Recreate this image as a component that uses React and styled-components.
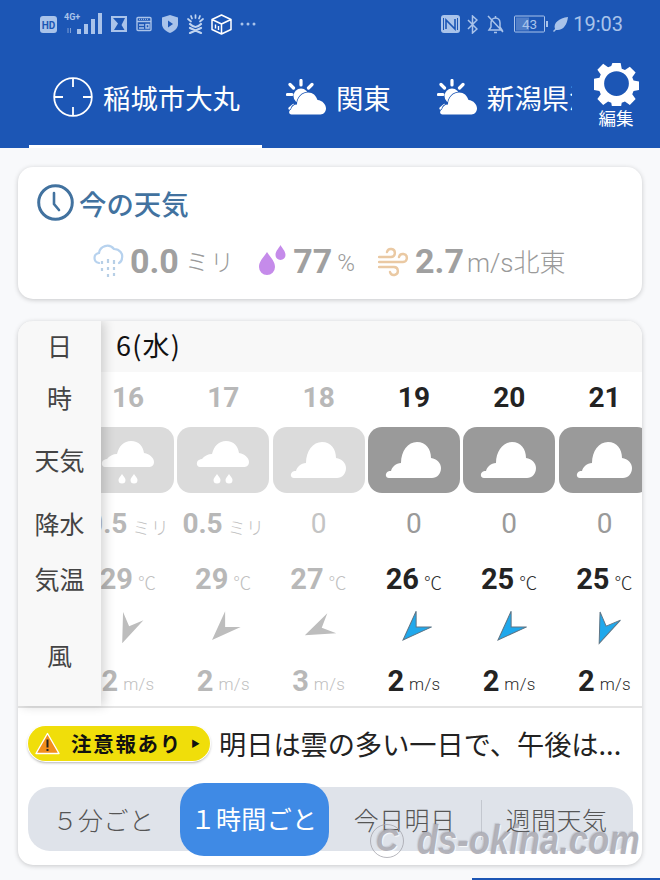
import React from 'react';
import styled, { createGlobalStyle } from 'styled-components';

const Global = createGlobalStyle`
  html, body { margin: 0; padding: 0; background: #f8f9fb; }
  body { font-family: Roboto, "Noto Sans CJK JP", sans-serif; }
`;
const JP = `"Noto Sans CJK JP", sans-serif`;
const NUM = `Roboto, "Noto Sans CJK JP", sans-serif`;

const Page = styled.div`
  position: relative; width: 660px; height: 880px; overflow: hidden; background: #f8f9fb;
`;
const Header = styled.header`
  height: 148px; background: #1c56b5; display: flex; flex-direction: column;
`;
const StatusBar = styled.div`
  height: 48px; padding: 0 37px 0 40px; display: flex; align-items: center; justify-content: space-between; color: #a9c3ea;
`;
const StatusGroup = styled.div`
  display: flex; align-items: center;
`;
const Slot = styled.span`
  display: flex; align-items: center; margin-left: ${p => p.$ml || 0}px;
`;
const Clock = styled.span`
  font: 400 20px ${NUM}; color: #a9c3ea; margin-left: 5px;
`;
const HeaderRow = styled.div`
  flex: 1; display: flex; min-height: 0;
`;
const Tabs = styled.div`
  margin-left: 29px; width: 543px; display: flex; overflow: hidden; white-space: nowrap;
`;
const Tab = styled.div`
  flex: none; height: 100px; box-sizing: border-box; padding: 0 22px 0 24px; display: flex; align-items: center; gap: 10px;
  color: #fff; font: 400 27.4px ${JP}; border-bottom: 3px solid ${p => p.$active ? '#fff' : 'transparent'};
`;
const TabClip = styled.span`
  display: block; white-space: nowrap;
`;
const Edit = styled.div`
  flex: 1; display: flex; flex-direction: column; align-items: center; padding: 13px 0 0 0; color: #fff; font: 400 17.5px/20px ${JP};
  svg { display: block; margin-bottom: 2px; }
`;
const Main = styled.main`
  padding: 19px 18px 0; display: flex; flex-direction: column; gap: 22px;
`;
const Card = styled.section`
  position: relative; background: #fff; border-radius: 15px; box-shadow: 0 1px 5px rgba(0,0,0,.2); overflow: hidden;
`;
const NowCard = styled(Card)`
  height: 132px; box-sizing: border-box; padding: 17px 19px 0;
`;
const NowTitle = styled.h2`
  margin: 0; display: flex; align-items: center; gap: 5px; height: 37px; color: #42729f; font: 500 27.4px ${JP};
`;
const Metrics = styled.div`
  display: flex; align-items: center; height: 42px; margin: 19px 0 0 56px;
`;
const Metric = styled.div`
  display: flex; align-items: center; margin-right: ${p => p.$mr}px;
`;
const MetricNum = styled.b`
  font: 700 34px/42px ${NUM}; color: #a0a0a0; margin: 0 ${p => p.$mr || 6}px 0 ${p => p.$ml || 6}px;
`;
const MetricUnit = styled.span`
  font: 300 ${p => p.$size || 24}px/42px ${NUM}; color: #9a9a9a; padding-top: 3px; letter-spacing: ${p => p.$ls || 0}px;
`;
const TableCard = styled(Card)`
  height: 544px;
`;
const DateRow = styled.div`
  height: 51px; background: #f8f8f8; padding-left: 98px; font: 400 27px/47px ${JP}; color: #111; letter-spacing: 1.2px;
`;
const Strip = styled.div`
  display: flex; padding-left: 62.4px; height: 334px; border-bottom: 2px solid #e4e4e4; overflow: hidden;
`;
const Column = styled.div`
  flex: none; width: 95.3px; display: flex; flex-direction: column; align-items: center;
  color: ${p => p.$past ? '#b8b8b8' : '#232323'};
`;
const HourCell = styled.div`
  height: 52px; font: 700 28px/52px ${NUM};
`;
const Tile = styled.div`
  flex: none; width: 92px; height: 66px; margin: 3px 0 0; border-radius: 14px; background: ${p => p.$past ? '#dbdbdb' : '#9a9a9a'};
  svg { display: block; }
`;
const ValueCell = styled.div`
  height: ${p => p.$h}px; display: flex; align-items: center; justify-content: center; gap: 5px; white-space: nowrap;
`;
const Big = styled.b`
  font: 700 ${p => p.$size || 29}px ${NUM};
`;
const Thin = styled.span`
  font: 400 28px ${NUM}; color: ${p => p.$past ? '#c4c4c4' : '#9a9a9a'};
`;
const Small = styled.span`
  font: 300 ${p => p.$size || 17}px ${NUM}; padding-top: 6px; letter-spacing: .3px; color: ${p => p.$past ? '#c0c0c0' : '#2a2a2a'};
`;
const RowLabels = styled.div`
  position: absolute; left: 0; top: 0; width: 83px; height: 385px; background: #f8f8f8; display: flex; flex-direction: column;
  box-shadow: 4px 0 10px rgba(0,0,0,.16);
`;
const RowLabel = styled.div`
  height: ${p => p.$h}px; box-sizing: border-box; padding-bottom: ${p => p.$low ? 0 : 3}px; padding-top: ${p => p.$low ? 1 : 0}px;
  display: flex; align-items: center; justify-content: center; font: 400 25px ${JP}; color: #444;
`;
const Notice = styled.div`
  height: 79px; display: flex; align-items: center; padding: 0 0 9px 10px; box-sizing: border-box;
`;
const Badge = styled.div`
  flex: none; width: 182px; height: 35px; box-sizing: border-box; border-radius: 18px; background: #f0de0a; padding-left: 7px;
  display: flex; align-items: center; box-shadow: 0 0 0 1px #fff, 0 1.5px 3px rgba(0,0,0,.4); font: 700 20.5px ${JP}; color: #111;
  letter-spacing: 1.7px;
  span.t { margin-left: 11px; }
  span.a { margin-left: 9px; font-size: 9px; letter-spacing: 0; }
`;
const NoticeText = styled.div`
  margin-left: 9px; font: 400 27.2px ${JP}; color: #222; white-space: nowrap;
`;
const Segment = styled.div`
  margin: 0 9.5px; height: 64px; background: #dfe3ea; border-radius: 22px; display: flex; align-items: center;
`;
const SegItem = styled.div`
  flex: 1; position: relative; text-align: center; font: 300 25px/60px ${JP}; letter-spacing: .4px;
  color: ${p => p.$active ? '#fff' : '#555'};
  ${p => p.$active ? `background:#3f8ae5; height:73px; line-height:71px; border-radius:24px; font-weight:400; flex:none; width:149px;` : ''}
  ${p => p.$sep ? `&::before{content:"";position:absolute;left:0;top:11px;height:40px;width:1px;background:#c3c7cf;}` : ''}
`;
const Watermark = styled.div`
  position: absolute; left: 370px; top: 818px; display: flex; align-items: center; gap: 13px; white-space: nowrap;
  font: italic 700 40px "Liberation Sans", sans-serif; letter-spacing: .2px; color: rgba(170,170,178,.88);
  text-shadow: 1px 1px 1px rgba(255,255,255,.8), -1px -1px 1px rgba(120,120,130,.25);
  i.c { flex: none; width: 32px; height: 32px; border: 1.5px solid rgba(165,165,172,.8); border-radius: 50%; display: flex; align-items: center; justify-content: center; font-size: 31px; }
  span { display: block; transform: scaleX(.857); transform-origin: left center; }
`;
const BottomEdge = styled.div`
  position: absolute; left: 472px; right: 0; bottom: 0; height: 2px; background: #1c56b5;
`;

const CLOUD = 'M5.500 35.500c-3 0-3-4-.5-5 .5-3 3-5 6-5 0-7 5-12 11-12 5 0 8 3 9.500 7.500 5 .5 8.500 4.500 8.500 8.500 0 3-2.500 6-5.500 6z';
const SunCloud = () => (
  <svg width="40" height="36" viewBox="0 0 40 36" fill="#fff" style={{ flex: 'none' }}>
    <path d="M15 1.500v4.500M4 5.500l3.500 3.500M26 5.500l-3.500 3.500M1.500 15.500h4.500M4 29.500l3.500-3" stroke="#fff" strokeWidth="3.200" strokeLinecap="round" />
    <circle cx="15" cy="17" r="7.500" />
    <path d={CLOUD} stroke="#1c56b5" strokeWidth="1.400" />
    <path d={CLOUD} />
  </svg>
);
const Cross = () => (
  <svg width="40" height="40" viewBox="0 0 40 40" fill="none" stroke="#fff" strokeWidth="1.800" style={{ flex: 'none' }}>
    <circle cx="20" cy="20" r="18.800" />
    <path d="M20 1v9M20 30v9M1 20h9M30 20h9" />
  </svg>
);
const Gear = () => (
  <svg width="45" height="45" viewBox="0 0 24 24" fill="#fff">
    <path fillRule="evenodd" d="M9.800 1h4.400l.6 3.100 1.700.7 2.600-1.800 3.100 3.100-1.800 2.600.7 1.700 3 .6v4.400l-3 .6-.7 1.700 1.800 2.600-3.100 3.100-2.600-1.800-1.700.7-.6 3.200H9.800l-.6-3.200-1.700-.7-2.600 1.800-3.100-3.100 1.800-2.600-.7-1.700-3-.6V9.500l3-.6.7-1.700L1.800 4.600 4.900 1.500 7.500 3.300l1.700-.7zM12 5.400a6.600 6.600 0 1 0 0 13.200 6.600 6.600 0 0 0 0-13.200z" />
  </svg>
);
const ClockIcon = () => (
  <svg width="37" height="37" viewBox="0 0 37 37" fill="none" stroke="#42729f" strokeWidth="3" style={{ flex: 'none' }}>
    <circle cx="18.500" cy="18.500" r="16.800" />
    <path d="M17 9v11l5 6" strokeWidth="2.600" strokeLinecap="round" />
  </svg>
);
const RainIcon = () => (
  <svg width="31" height="36" viewBox="0 0 31 36" fill="none">
    <path d="M6 20c-6-1-6-9 0-10C7 3 16 0 21 6c6 0 9 5 8 9 0 2-1 4-3 5" stroke="#b7d2ee" strokeWidth="2.200" strokeLinecap="round" />
    <path d="M9 18v3M15 16v4M21 17v4M9 25v3M15 24v3M21 24v3M15 31v3M21 30v3" stroke="#b7cfe6" strokeWidth="2.200" />
  </svg>
);
const DropIcon = () => (
  <svg width="28" height="32" viewBox="0 0 28 32" fill="#c58bea">
    <path d="M8 7c3 5 8 9 8 15a8 8 0 0 1-16 0c0-6 5-10 8-15z" />
    <path d="M21.500 0c1.500 3 5 6 5 10a5 5 0 0 1-10 0c0-4 3.500-7 5-10z" />
  </svg>
);
const WindIcon = () => (
  <svg width="31" height="32" viewBox="0 0 31 32" fill="none" stroke="#eac9a3" strokeWidth="2.400" strokeLinecap="round">
    <path d="M1 12h12a4 4 0 1 0-4-5" />
    <path d="M1 17h24a4 4 0 1 0-4-5" />
    <path d="M1 22h15a4 4 0 1 1-4 5" />
  </svg>
);
const CloudTile = () => (
  <svg width="92" height="66" viewBox="0 0 92 66" fill="#fff">
    <path d="M21 51c-4 0-4-5-1-6.500 1-.5 2-.5 3-.5 1-4 5-8 10-8 0-12 7-21 16-21 9 0 14 7 14 16 6 1 10 5 10 10 0 6-4 10-9 10z" />
  </svg>
);
const RainTile = () => (
  <svg width="92" height="66" viewBox="0 0 92 66" fill="#fff">
    <path d="M23 40c-4 0-4-6-1-7 1-.5 2-1 3-1 2-3 6-5 10-5 2-8 7-13 14-13 8 0 12 5 13 12 6 1 10 5 10 9 0 4-3 5-5 5z" />
    <path d="M40 47c2 3 3.500 4 3.500 6a3.500 3.500 0 0 1-7 0c0-2 1.500-3 3.500-6zM52 47c2 3 3.500 4 3.500 6a3.500 3.500 0 0 1-7 0c0-2 1.500-3 3.500-6z" />
  </svg>
);
const Arrow = ({ deg, past }) => (
  <svg width="40" height="40" viewBox="0 0 40 40" style={{ transform: `rotate(${deg}deg)` }}>
    <path d="M20 4.500 31 34 20 23 9 34z" fill={past ? '#bdbdbd' : '#1fa8ec'} stroke={past ? 'none' : '#5f7585'} strokeWidth="1" />
  </svg>
);
const TriangleIcon = () => (
  <svg width="25" height="23" viewBox="0 0 25 23">
    <path d="M12.500 1.500 24 21.500H1z" fill="#f28e1c" stroke="#fff" strokeWidth="1.400" strokeLinejoin="round" />
    <path d="M12.500 7.500v8M12.500 17v2" stroke="#222" strokeWidth="2" />
  </svg>
);
const HD = () => (
  <svg width="17" height="17" viewBox="0 0 17 17">
    <rect width="17" height="17" rx="3" fill="#a9c3ea" />
    <text x="8.500" y="12.500" fontSize="10" fontWeight="700" fontFamily="Roboto" fill="#1c56b5" textAnchor="middle">HD</text>
  </svg>
);
const Signal = () => (
  <svg width="38" height="24" viewBox="0 0 38 24" fill="#a9c3ea">
    <text x="0" y="8" fontSize="9" fontWeight="700" fontFamily="Roboto">4G+</text>
    <path d="M4 16v5M6.500 21v-5" stroke="#7f9fd6" strokeWidth="1" />
    <rect x="13" y="17" width="4" height="5" />
    <rect x="20" y="12" width="4" height="10" />
    <rect x="27" y="7" width="4" height="15" />
    <rect x="34" y="1" width="4" height="21" />
  </svg>
);
const IconK = () => (
  <svg width="16" height="16" viewBox="0 0 16 16" fill="#a9c3ea">
    <path fillRule="evenodd" d="M0 0h16v16H0zM2 2l5 5.500L3 14h10.500l-3-5 3.500-7H11L6 2z" />
  </svg>
);
const IconCal = () => (
  <svg width="16" height="16" viewBox="0 0 16 16" fill="none" stroke="#a9c3ea" strokeWidth="1.400">
    <rect x="1" y="1.500" width="14" height="13" rx="1" />
    <path d="M1 5.500h14M3 9h5M3 12h5M10 8.500h3v3.500h-3z" />
    <path d="M3 3.300h10" strokeDasharray="1 1" strokeWidth="1" />
  </svg>
);
const IconShield = () => (
  <svg width="16" height="18" viewBox="0 0 16 18">
    <path d="M8 0l8 2.500V9c0 4-3 7-8 9-5-2-8-5-8-9V2.500z" fill="#a9c3ea" />
    <path d="M6 5.500l5 3.500-5 3.500z" fill="#1c56b5" />
  </svg>
);
const IconClaw = () => (
  <svg width="17" height="20" viewBox="0 0 17 20" fill="none" stroke="#c0d4f0" strokeWidth="1.700" strokeLinecap="round">
    <path d="M8.500 1v3M4 2l1 2.500M13 2l-1 2.500M1 5l3 2.500M16 5l-3 2.500" />
    <path d="M3 10c2 2 3.500 3 5.500 3s3.500-1 5.500-3M3 19l11-5M14 19 3 14" strokeWidth="2.200" />
  </svg>
);
const IconCube = () => (
  <svg width="21" height="21" viewBox="0 0 21 21" fill="none" stroke="#fff" strokeWidth="1.500" strokeLinejoin="round">
    <path d="M10.500 1 20 5.500v10L10.500 20 1 15.500v-10zM1 5.500l9.500 4.500L20 5.500M10.500 10v10" />
    <path d="M4.500 10.500v4M7.500 12v4" strokeWidth="1.400" />
  </svg>
);
const Dots = () => (
  <svg width="16" height="4" viewBox="0 0 16 4" fill="#a9c3ea"><circle cx="2" cy="2" r="1.500" /><circle cx="8" cy="2" r="1.500" /><circle cx="14" cy="2" r="1.500" /></svg>
);
const IconNfc = () => (
  <svg width="19" height="18" viewBox="0 0 19 18">
    <rect width="19" height="18" rx="3" fill="#a9c3ea" />
    <path d="M5 14V5l9 9V4" fill="none" stroke="#1c56b5" strokeWidth="1.600" />
    <path d="M2.500 3v12M16.500 3v12" stroke="#1c56b5" strokeWidth="1" />
  </svg>
);
const IconBt = () => (
  <svg width="11" height="19" viewBox="0 0 11 19" fill="none" stroke="#a9c3ea" strokeWidth="1.500">
    <path d="M1 5l9 9-4.500 4V1L10 5 1 14" />
  </svg>
);
const IconBell = () => (
  <svg width="17" height="19" viewBox="0 0 17 19" fill="none" stroke="#a9c3ea" strokeWidth="1.500">
    <path d="M2 15h13l-2-3V8c0-3-2-5-4.500-5S4 5 4 8v4zM7 17.500h3M1 1l15 16M8.500 1v2" />
  </svg>
);
const Battery = () => (
  <svg width="36" height="18" viewBox="0 0 36 18">
    <rect x=".5" y="1" width="30" height="16" rx="1" fill="none" stroke="#a9c3ea" />
    <rect x="2" y="2.500" width="13" height="13" fill="#4f7dc7" />
    <text x="15.500" y="14" fontSize="13.500" fontFamily="Roboto" fill="#a9c3ea" textAnchor="middle">43</text>
    <rect x="32" y="6" width="2" height="6" fill="#a9c3ea" />
  </svg>
);
const Leaf = () => (
  <svg width="15" height="15" viewBox="0 0 15 15" fill="#a9c3ea"><path d="M15 0C14 8 10 14 3 13L1 15 0 14l2-2C0 6 6 1 15 0z" /></svg>
);

const hours = [
  { h: 16, past: 1, rain: '0.5', rainU: 1, t: 29, deg: 202, ws: 2, icon: 'r' },
  { h: 17, past: 1, rain: '0.5', rainU: 1, t: 29, deg: 225, ws: 2, icon: 'r' },
  { h: 18, past: 1, rain: '0', t: 27, deg: 246, ws: 3, icon: 'c' },
  { h: 19, rain: '0', t: 26, deg: 225, ws: 2, icon: 'c' },
  { h: 20, rain: '0', t: 25, deg: 225, ws: 2, icon: 'c' },
  { h: 21, rain: '0', t: 25, deg: 202, ws: 2, icon: 'c' },
];

export default function App() {
  return (
    <Page>
      <Global />
      <Header>
        <StatusBar>
          <StatusGroup>
            <HD />
            <Slot $ml={7}><Signal /></Slot>
            <Slot $ml={9}><IconK /></Slot>
            <Slot $ml={9}><IconCal /></Slot>
            <Slot $ml={10}><IconShield /></Slot>
            <Slot $ml={9}><IconClaw /></Slot>
            <Slot $ml={7}><IconCube /></Slot>
            <Slot $ml={8}><Dots /></Slot>
          </StatusGroup>
          <StatusGroup>
            <IconNfc />
            <Slot $ml={7}><IconBt /></Slot>
            <Slot $ml={9}><IconBell /></Slot>
            <Slot $ml={10}><Battery /></Slot>
            <Slot $ml={3}><Leaf /></Slot>
            <Clock>19:03</Clock>
          </StatusGroup>
        </StatusBar>
        <HeaderRow>
          <Tabs>
            <Tab $active><Cross />稲城市大丸</Tab>
            <Tab><SunCloud />関東</Tab>
            <Tab><SunCloud /><TabClip>新潟県湯沢</TabClip></Tab>
          </Tabs>
          <Edit><Gear />編集</Edit>
        </HeaderRow>
      </Header>
      <Main>
        <NowCard>
          <NowTitle><ClockIcon />今の天気</NowTitle>
          <Metrics>
            <Metric $mr={24}><RainIcon /><MetricNum>0.0</MetricNum><MetricUnit $ls={1.2}>ミリ</MetricUnit></Metric>
            <Metric $mr={23}><DropIcon /><MetricNum $mr={5} $ml={6}>77</MetricNum><MetricUnit>%</MetricUnit></Metric>
            <Metric $mr={0}><WindIcon /><MetricNum $mr={3}>2.7</MetricNum><MetricUnit $size={26}>m/s北東</MetricUnit></Metric>
          </Metrics>
        </NowCard>
        <TableCard>
          <DateRow>6(水)</DateRow>
          <Strip>
            {hours.map(c => (
              <Column key={c.h} $past={c.past}>
                <HourCell>{c.h}</HourCell>
                <Tile $past={c.past}>{c.icon === 'r' ? <RainTile /> : <CloudTile />}</Tile>
                <ValueCell $h={62}>
                  {c.rainU ? <><Big $size={28}>{c.rain}</Big><Small $size={18} $past>ミリ</Small></> : <Thin $past={c.past}>{c.rain}</Thin>}
                </ValueCell>
                <ValueCell $h={48}><Big>{c.t}</Big><Small $size={18} $past={c.past}>℃</Small></ValueCell>
                <ValueCell $h={54}><Arrow deg={c.deg} past={c.past} /></ValueCell>
                <ValueCell $h={50}><Big>{c.ws}</Big><Small $past={c.past}>m/s</Small></ValueCell>
              </Column>
            ))}
          </Strip>
          <RowLabels>
            <RowLabel $h={51}>日</RowLabel>
            <RowLabel $h={52}>時</RowLabel>
            <RowLabel $h={69} $low>天気</RowLabel>
            <RowLabel $h={62}>降水</RowLabel>
            <RowLabel $h={48}>気温</RowLabel>
            <RowLabel $h={103} $low>風</RowLabel>
          </RowLabels>
          <Notice>
            <Badge><TriangleIcon /><span className="t">注意報あり</span><span className="a">▶</span></Badge>
            <NoticeText>明日は雲の多い一日で、午後は...</NoticeText>
          </Notice>
          <Segment>
            <SegItem>５分ごと</SegItem>
            <SegItem $active>１時間ごと</SegItem>
            <SegItem>今日明日</SegItem>
            <SegItem $sep>週間天気</SegItem>
          </Segment>
        </TableCard>
      </Main>
      <Watermark><i className="c">C</i><span>ds-okina.com</span></Watermark>
      <BottomEdge />
    </Page>
  );
}
